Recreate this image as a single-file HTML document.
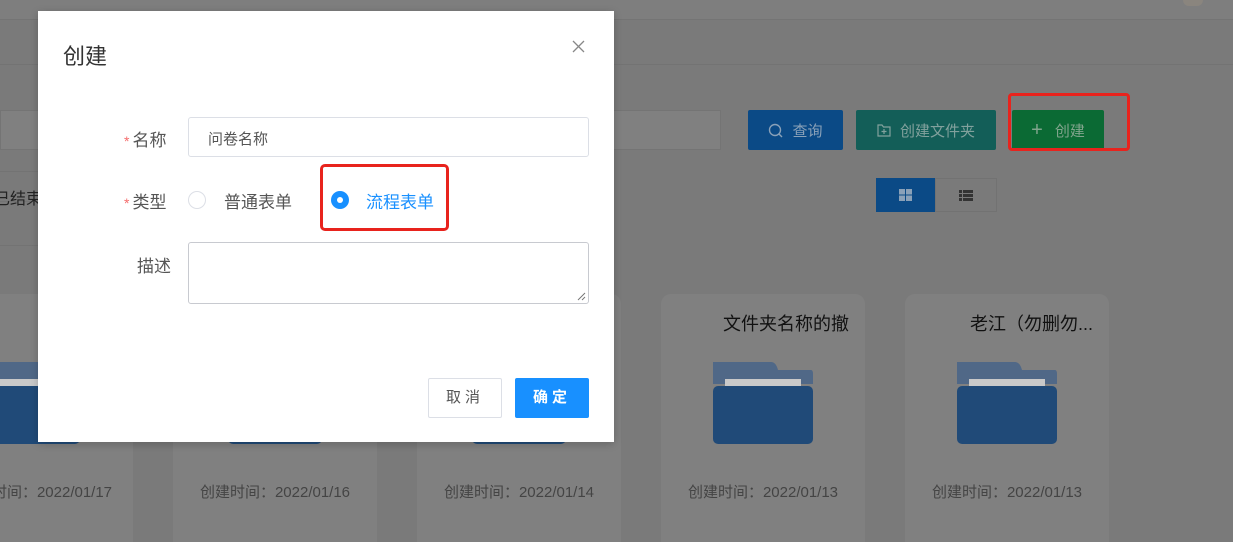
<!DOCTYPE html>
<html style="width:1233px;height:542px;overflow:hidden"><head><meta charset="utf-8"><style>
*{box-sizing:border-box;margin:0;padding:0}
body{width:1233px;height:542px;overflow:hidden;background:#7a7a7a;font-family:"Liberation Sans","Noto Sans CJK SC",sans-serif;position:relative}
.a{position:absolute}
.card{position:absolute;top:294px;width:204px;height:248px;background:#808080;border-radius:10px 10px 0 0}
.card .t{position:absolute;top:16px;right:16px;font-size:18px;color:#111;white-space:nowrap}
.card .d{position:absolute;top:187px;left:0;width:100%;text-align:center;font-size:15px;color:#444}
.fold{position:absolute;left:52px;top:68px;width:100px;height:82px}
.btn{position:absolute;top:110px;height:40px;color:#7d9a97;font-size:15px;display:flex;align-items:center;justify-content:center;border-radius:2px}
</style></head><body>
<div class="a" style="left:0;top:0;width:1233px;height:20px;background:#7e7e7e;border-bottom:1px solid #747474"></div>
<div class="a" style="left:0;top:64px;width:1233px;height:1px;background:#737373"></div>
<div class="a" style="left:1183px;top:0;width:20px;height:6px;border-radius:0 0 10px 10px;background:#8a857e"></div>
<div class="a" style="left:0;top:110px;width:721px;height:40px;background:#808080;border:1px solid #747474"></div>
<div class="btn" style="left:748px;width:95px;background:#0b4a86;color:#8aa1b8"><svg width="15" height="15" viewBox="0 0 15 15" style="margin-right:9px"><circle cx="7" cy="7" r="5.5" fill="none" stroke="#8aa1b8" stroke-width="1.4"/><path d="M11 11l3 3" stroke="#8aa1b8" stroke-width="1.4"/></svg>查询</div>
<div class="btn" style="left:856px;width:140px;background:#135e58;color:#82a19d"><svg width="14" height="13" viewBox="0 0 14 13" style="margin-right:9px"><path d="M1 1h4l1.5 2H13v9H1z" fill="none" stroke="#82a19d" stroke-width="1.2"/><path d="M7 5v5M4.5 7.5h5" stroke="#82a19d" stroke-width="1.2"/></svg>创建文件夹</div>
<div class="btn" style="left:1012px;width:92px;background:#0b6a34;color:#80a48c"><span style="font-size:20px;margin-right:12px;font-weight:300">+</span>创建</div>
<div class="a" style="left:1008px;top:93px;width:122px;height:58px;border:3px solid #e8231d;border-radius:4px"></div>
<div class="a" style="left:876px;top:178px;width:59px;height:34px;background:#0b4a86;display:flex;align-items:center;justify-content:center"><svg width="13" height="12"><rect x="0" y="0" width="6" height="5.5" fill="#8aa1b8"/><rect x="7" y="0" width="6" height="5.5" fill="#8aa1b8"/><rect x="0" y="6.5" width="6" height="5.5" fill="#8aa1b8"/><rect x="7" y="6.5" width="6" height="5.5" fill="#8aa1b8"/></svg></div>
<div class="a" style="left:935px;top:178px;width:62px;height:34px;border:1px solid #727272;display:flex;align-items:center;justify-content:center"><svg width="14" height="11"><rect x="0" y="0" width="3" height="3" fill="#333"/><rect x="4" y="0" width="10" height="3" fill="#333"/><rect x="0" y="4" width="3" height="3" fill="#333"/><rect x="4" y="4" width="10" height="3" fill="#333"/><rect x="0" y="8" width="3" height="3" fill="#333"/><rect x="4" y="8" width="10" height="3" fill="#333"/></svg></div>
<div class="a" style="left:0;top:171px;width:40px;height:1px;background:#737373"></div>
<div class="a" style="left:0;top:201px;width:40px;height:1px;background:#737373"></div>
<div class="a" style="left:0;top:245px;width:40px;height:1px;background:#737373"></div>
<div class="a" style="left:-6px;top:185px;font-size:16px;color:#222">已结束</div>

<div class="card" style="left:-71px"><div class="t">文件夹</div><div class="d" style="left:6px">创建时间：2022/01/17</div></div>
<div class="card" style="left:173px"><div class="d">创建时间：2022/01/16</div></div>
<div class="card" style="left:417px"><div class="d">创建时间：2022/01/14</div></div>
<div class="card" style="left:661px"><div class="t">文件夹名称的撤</div>
<svg class="fold" viewBox="0 0 100 82"><path d="M0 0h58q5 0 7 8h33q2 0 2 4v10H0z" fill="#506887"/><rect x="12" y="17" width="76" height="7" fill="#c9c9c9"/><rect x="0" y="24" width="100" height="58" rx="5" fill="#204a78"/></svg>
<div class="d">创建时间：2022/01/13</div></div>
<div class="card" style="left:905px"><div class="t">老江（勿删勿...</div>
<svg class="fold" viewBox="0 0 100 82"><path d="M0 0h58q5 0 7 8h33q2 0 2 4v10H0z" fill="#506887"/><rect x="12" y="17" width="76" height="7" fill="#c9c9c9"/><rect x="0" y="24" width="100" height="58" rx="5" fill="#204a78"/></svg>
<div class="d">创建时间：2022/01/13</div></div>
<div class="a" style="left:0;top:362px;width:80px;height:82px"><div style="position:absolute;left:0;top:0;width:80px;height:20px;background:#506887"></div><div style="position:absolute;left:0;top:17px;width:40px;height:7px;background:#c9c9c9"></div><div style="position:absolute;left:0;top:24px;width:80px;height:58px;background:#204a78;border-radius:0 5px 5px 0"></div></div>
<div class="a" style="left:228px;top:438px;width:94px;height:6px;background:#204a78;border-radius:0 0 5px 5px"></div>
<div class="a" style="left:472px;top:438px;width:94px;height:6px;background:#204a78;border-radius:0 0 5px 5px"></div>

<div class="a" style="left:38px;top:11px;width:576px;height:431px;background:#fff;box-shadow:0 2px 8px rgba(0,0,0,.2)">
 <div class="a" style="left:25px;top:28px;font-size:22px;color:#333">创建</div>
 <svg class="a" style="left:534px;top:29px" width="13" height="13"><path d="M1 1l11 11M12 1L1 12" stroke="#888" stroke-width="1.3"/></svg>
 <div class="a" style="left:86px;top:115px;font-size:17px;color:#555"><span style="color:#f56c6c;font-size:14px;margin-right:3px">*</span>名称</div>
 <div class="a" style="left:150px;top:106px;width:401px;height:40px;border:1px solid #dcdfe6;border-radius:3px;font-size:15px;color:#555;padding:10px 0 0 19px">问卷名称</div>
 <div class="a" style="left:86px;top:177px;font-size:17px;color:#555"><span style="color:#f56c6c;font-size:14px;margin-right:3px">*</span>类型</div>
 <div class="a" style="left:150px;top:180px;width:18px;height:18px;border:1px solid #dcdfe6;border-radius:50%"></div>
 <div class="a" style="left:186px;top:177px;font-size:17px;color:#555">普通表单</div>
 <div class="a" style="left:293px;top:180px;width:18px;height:18px;background:#1890ff;border-radius:50%"><div style="position:absolute;left:6px;top:6px;width:6px;height:6px;background:#fff;border-radius:50%"></div></div>
 <div class="a" style="left:328px;top:177px;font-size:17px;color:#1890ff">流程表单</div>
 <div class="a" style="left:282px;top:153px;width:129px;height:67px;border:3px solid #e8231d;border-radius:5px"></div>
 <div class="a" style="left:99px;top:241px;font-size:17px;color:#555">描述</div>
 <div class="a" style="left:150px;top:231px;width:401px;height:62px;border:1px solid #c8cad0;border-radius:3px"><svg class="a" style="right:2px;bottom:2px" width="9" height="9"><path d="M1 8L8 1M5 8L8 5" stroke="#777" stroke-width="1"/></svg></div>
 <div class="a" style="left:390px;top:367px;width:74px;height:40px;border:1px solid #dcdfe6;border-radius:2px;font-size:15px;color:#555;text-align:center;line-height:38px;letter-spacing:4px">取消</div>
 <div class="a" style="left:477px;top:367px;width:74px;height:40px;background:#1890ff;border-radius:2px;font-size:15px;color:#fff;text-align:center;line-height:40px;letter-spacing:4px;font-weight:bold">确定</div>
</div>
</body></html>
